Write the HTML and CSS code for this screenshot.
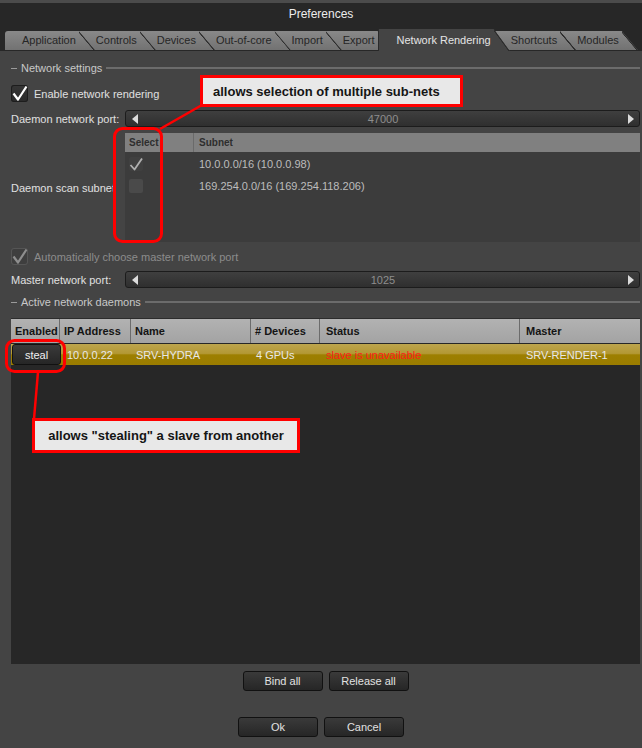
FILE: index.html
```html
<!DOCTYPE html>
<html lang="en">
<head>
  <meta charset="UTF-8" />
  <meta name="viewport" content="width=device-width, initial-scale=1" />
  <title>Preferences</title>
  <link rel="stylesheet" href="styles.css">
</head>
<body>
  <div class="window">
    <div class="titlebar">Preferences</div>

    <div class="tabs">
      <div class="tab">Application</div>
      <div class="tab">Controls</div>
      <div class="tab">Devices</div>
      <div class="tab">Out-of-core</div>
      <div class="tab">Import</div>
      <div class="tab">Export</div>
      <div class="tab active">Network Rendering</div>
      <div class="tab">Shortcuts</div>
      <div class="tab">Modules</div>
    </div>

    <div class="page">
      <div class="group-title"><span>Network settings</span></div>

      <div class="check-row">
        <span class="box">
          <svg width="17" height="17" viewBox="0 0 17 17"><path d="M2.5 8.5 L7 14.5 L15.5 1.5" fill="none" stroke="#fff" stroke-width="2.2" stroke-linejoin="round"/></svg>
        </span>
        <span>Enable network rendering</span>
      </div>

      <div class="field-row">
        <span class="field-label">Daemon network port:</span>
        <div class="spin">
          <span class="arrow left"></span>
          <span class="spin-val">47000</span>
          <span class="arrow right"></span>
        </div>
      </div>

      <div class="field-row subnet-row">
        <span class="field-label">Daemon scan subnet</span>
        <div class="subnets">
          <div class="sub-head">
            <span class="c-sel">Select</span>
            <span class="c-net">Subnet</span>
          </div>
          <div class="sub-row first">
            <span class="c-sel">
              <span class="mini-box">
                <svg width="14" height="14" viewBox="0 0 14 14"><path d="M1.5 8 L5.5 12.5 L13 1.5" fill="none" stroke="#b0b0b0" stroke-width="1.8" stroke-linejoin="round"/></svg>
              </span>
            </span>
            <span class="c-net">10.0.0.0/16 (10.0.0.98)</span>
          </div>
          <div class="sub-row">
            <span class="c-sel"><span class="mini-box empty"></span></span>
            <span class="c-net">169.254.0.0/16 (169.254.118.206)</span>
          </div>
        </div>
      </div>

      <div class="check-row disabled">
        <span class="box">
          <svg width="17" height="17" viewBox="0 0 17 17"><path d="M2.5 8.5 L7 14.5 L15.5 1.5" fill="none" stroke="#8e8e8e" stroke-width="2.2" stroke-linejoin="round"/></svg>
        </span>
        <span>Automatically choose master network port</span>
      </div>

      <div class="field-row">
        <span class="field-label">Master network port:</span>
        <div class="spin">
          <span class="arrow left"></span>
          <span class="spin-val">1025</span>
          <span class="arrow right"></span>
        </div>
      </div>

      <div class="group-title second"><span>Active network daemons</span></div>

      <div class="daemons">
        <div class="d-head">
          <span class="d-en">Enabled</span>
          <span class="d-ip">IP Address</span>
          <span class="d-name">Name</span>
          <span class="d-dev"># Devices</span>
          <span class="d-status">Status</span>
          <span class="d-master">Master</span>
        </div>
        <div class="d-row">
          <span class="d-en"><button type="button" class="steal">steal</button></span>
          <span class="d-ip">10.0.0.22</span>
          <span class="d-name">SRV-HYDRA</span>
          <span class="d-dev">4 GPUs</span>
          <span class="d-status unavailable">slave is unavailable</span>
          <span class="d-master">SRV-RENDER-1</span>
        </div>
      </div>

      <div class="button-group">
        <button type="button">Bind all</button>
        <button type="button">Release all</button>
      </div>
    </div>

    <div class="dialog-buttons">
      <button type="button">Ok</button>
      <button type="button">Cancel</button>
    </div>

    <!-- annotations -->
    <svg class="marks" width="642" height="748" viewBox="0 0 642 748">
      <line x1="202" y1="105" x2="160" y2="129" stroke="#f00" stroke-width="2.5"/>
      <rect x="114.5" y="128.5" width="47" height="113" rx="8" fill="none" stroke="#f00" stroke-width="3"/>
      <line x1="38" y1="372" x2="34" y2="419" stroke="#f00" stroke-width="2.5"/>
      <rect x="6.5" y="340.5" width="58" height="31" rx="8" fill="none" stroke="#f00" stroke-width="3"/>
    </svg>
    <div class="callout callout-subnet">allows selection of multiple sub-nets</div>
    <div class="callout callout-steal">allows "stealing" a slave from another</div>
  </div>
</body>
</html>
```

FILE: styles.css
```css
body {
  margin: 0;
  background-color: #444;
  font-family: "Liberation Sans", Arial, sans-serif;
  font-size: 11px;
  color: #dedede;
}
.window {
  position: relative;
  width: 642px;
  height: 748px;
  overflow: hidden;
  background: #444;
}
.titlebar {
  height: 23px;
  border-top: 3px solid #4b4b4b;
  background: #272727;
  color: #ececec;
  font-size: 12px;
  line-height: 23px;
  text-align: center;
}

/* tabs */
.tabs {
  display: flex;
  align-items: flex-end;
  height: 25px;
  padding-left: 5px;
  background: #272727;
}
.tab {
  position: relative;
  height: 19px;
  line-height: 19px;
  margin-bottom: 1px;
  margin-right: -16px;
  padding: 0 19px 0 17px;
  color: #262626;
  white-space: nowrap;
  background:
    linear-gradient(to top right, transparent 44%, #2b2b2b 46%, #2b2b2b 50%, transparent 51%) right / 16px 100% no-repeat,
    linear-gradient(#898989, #727272);
  clip-path: polygon(0 0, calc(100% - 16px) 0, 100% 100%, 0 100%);
}
.tab:nth-child(1) { z-index: 9; border-top-left-radius: 3px; }
.tab:nth-child(2) { z-index: 8; }
.tab:nth-child(3) { z-index: 7; }
.tab:nth-child(4) { z-index: 6; }
.tab:nth-child(5) { z-index: 5; }
.tab:nth-child(6) { z-index: 4; }
.tab:nth-child(8) { z-index: 2; }
.tab:nth-child(9) { z-index: 1; }
.tab.active {
  z-index: 20;
  height: 22px;
  line-height: 23px;
  margin-bottom: 0;
  padding-left: 18px;
  color: #e4e4e4;
  border-left: 1px solid #2a2a2a;
  background:
    linear-gradient(to top right, transparent 44%, #2b2b2b 46%, #2b2b2b 50%, transparent 51%) right / 16px 100% no-repeat,
    #444;
}

/* page */
.page {
  display: flex;
  flex-direction: column;
  padding: 0 2px 0 11px;
}
.group-title {
  display: flex;
  align-items: center;
  gap: 4px;
  height: 14px;
  margin-top: 10px;
  color: #c8c8c8;
}
.group-title::before {
  content: "";
  width: 6px;
  height: 1px;
  background: #9a9a9a;
}
.group-title::after {
  content: "";
  flex: 1;
  height: 2px;
  background: #6c6c6c;
}
.group-title.second {
  margin-top: 7px;
}
.check-row {
  display: flex;
  align-items: center;
  gap: 6px;
  height: 17px;
  margin-top: 10px;
  color: #e0e0e0;
}
.check-row + .field-row {
  margin-top: 8px;
}
.box {
  width: 17px;
  height: 17px;
  border-radius: 3px;
  background: linear-gradient(#363636, #2a2a2a);
  box-shadow: inset 0 0 0 1px #1d1d1d;
}
.box svg {
  display: block;
}
.check-row.disabled {
  margin-top: 6px;
  color: #8c8c8c;
}
.check-row.disabled .box {
  background: #3e3e3e;
  box-shadow: inset 0 0 0 1px #555;
}
.check-row.disabled + .field-row {
  margin-top: 6px;
}
.field-row {
  display: flex;
  align-items: center;
  height: 17px;
}
.field-label {
  width: 114px;
  color: #e0e0e0;
}
.spin {
  flex: 1;
  display: flex;
  align-items: center;
  height: 17px;
  box-sizing: border-box;
  padding: 0 5px 0 6px;
  border: 1px solid #1c1c1c;
  border-radius: 3px;
  background: linear-gradient(#3f3f3f, #2f2f2f);
}
.spin-val {
  flex: 1;
  text-align: center;
  color: #8e8e8e;
}
.arrow {
  width: 0;
  height: 0;
  border-top: 5px solid transparent;
  border-bottom: 5px solid transparent;
}
.arrow.left {
  border-right: 6px solid #dcdcdc;
}
.arrow.right {
  border-left: 6px solid #dcdcdc;
}

/* subnet list */
.subnet-row {
  height: 109px;
  margin-top: 6px;
}
.subnets {
  flex: 1;
  height: 109px;
  background: #3c3c3c;
}
.sub-head {
  display: flex;
  height: 19px;
  line-height: 19px;
  background: #808080;
  color: #2e2e2e;
  font-size: 10px;
  font-weight: bold;
}
.c-sel {
  width: 69px;
  box-sizing: border-box;
  padding-left: 4px;
}
.sub-head .c-sel {
  border-right: 1px solid #6a6a6a;
}
.c-net {
  padding-left: 5px;
}
.sub-row {
  display: flex;
  align-items: center;
  height: 22px;
  color: #bdbdbd;
}
.sub-row.first {
  margin-top: 1px;
}
.mini-box {
  display: block;
  width: 14px;
  height: 14px;
  border-radius: 2px;
  background: #404040;
}
.mini-box svg {
  display: block;
}
.mini-box.empty {
  background: #4a4a4a;
}

/* daemon table */
.daemons {
  height: 345px;
  margin-top: 9px;
  border-top: 1px solid #2c2c2c;
  background: #272727;
}
.d-head {
  display: flex;
  height: 24px;
  line-height: 24px;
  background: linear-gradient(#b2b2b2, #a3a3a3);
  color: #141414;
  font-weight: bold;
}
.d-head span {
  box-sizing: border-box;
  padding-left: 4px;
  border-right: 1px solid #6c6c6c;
}
.d-head .d-status,
.d-head .d-master {
  padding-left: 6px;
}
.d-en { width: 49px; }
.d-ip { width: 71px; }
.d-name { width: 120px; }
.d-dev { width: 69px; }
.d-status { width: 200px; }
.d-master { flex: 1; }
.d-head .d-master {
  border-right: none;
}
.d-row {
  display: flex;
  align-items: center;
  height: 21px;
  margin-top: 1px;
  color: #e8e8e8;
  background: linear-gradient(#bda54d 0%, #b39834 45%, #9d7f00 52%, #9a7c00 100%);
}
.d-row span {
  box-sizing: border-box;
  padding-left: 5px;
}
.d-row .d-ip {
  padding-left: 7px;
}
.d-row .d-status,
.d-row .d-master {
  padding-left: 6px;
}
.d-row .d-en {
  padding-left: 1px;
}
.unavailable {
  color: #ff1a1a;
}
button {
  height: 20px;
  width: 80px;
  padding: 0;
  font-family: "Liberation Sans", Arial, sans-serif;
  font-size: 11px;
  color: #e2e2e2;
  border: 1px solid #111;
  border-radius: 3px;
  background: linear-gradient(#3a3a3a, #262626);
}
.steal {
  display: block;
  width: 49px;
  height: 21px;
  color: #f0f0f0;
}
.button-group {
  display: flex;
  justify-content: center;
  gap: 6px;
  margin-top: 7px;
}
.dialog-buttons {
  display: flex;
  justify-content: center;
  gap: 6px;
  margin-top: 26px;
}

/* annotations */
.marks {
  position: absolute;
  top: 0;
  left: 0;
  pointer-events: none;
}
.callout {
  position: absolute;
  display: flex;
  align-items: center;
  box-sizing: border-box;
  border: 3px solid #f00;
  background: #e8e8e8;
  color: #151515;
  font-size: 13px;
  font-weight: bold;
  white-space: nowrap;
}
.callout-subnet {
  left: 200px;
  top: 75px;
  width: 263px;
  height: 32px;
  padding-left: 10px;
}
.callout-steal {
  left: 32px;
  top: 418px;
  width: 268px;
  height: 35px;
  justify-content: center;
}
```
